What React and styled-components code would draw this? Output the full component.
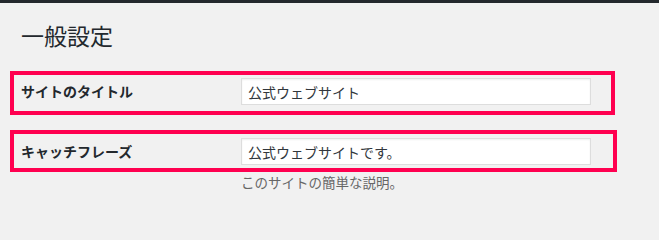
import styled, { createGlobalStyle } from 'styled-components';

const FONT = '"Noto Sans CJK JP", "Noto Sans", sans-serif';
const COLOR_BG = '#f1f1f1';
const COLOR_DARK = '#23282d';
const COLOR_MARK = '#ff0050';

const GlobalStyle = createGlobalStyle`
  body {
    margin: 0;
    background-color: ${COLOR_BG};
    color: ${COLOR_DARK};
    font-family: ${FONT};
  }
`;

const rows = [
  { label: 'サイトのタイトル', value: '公式ウェブサイト', width: 605, height: 44, top: 3 },
  {
    label: 'キャッチフレーズ',
    value: '公式ウェブサイトです。',
    width: 607,
    height: 42,
    top: 4,
    note: 'このサイトの簡単な説明。',
  },
];

function App() {
  return (
    <Page>
      <GlobalStyle />
      <TopBar />
      <Wrap>
        <Heading>一般設定</Heading>
        <Form>
          {rows.map((row) => (
            <Field key={row.label}>
              <Marked $width={row.width} $height={row.height} $top={row.top}>
                <Label>{row.label}</Label>
                <TextInput readOnly value={row.value} />
              </Marked>
              {row.note ? <Note>{row.note}</Note> : null}
            </Field>
          ))}
        </Form>
      </Wrap>
    </Page>
  );
}

const Page = styled.div`
  width: 659px;
  height: 209px;
  overflow: hidden;
`;

const TopBar = styled.div`
  height: 3px;
  background-color: ${COLOR_DARK};
`;

const Wrap = styled.div`
  display: flex;
  flex-direction: column;
  padding: 0 0 0 10px;
`;

const Heading = styled.h1`
  margin: 18px 0 21px;
  padding: 0 11px;
  font-size: 23px;
  font-weight: 400;
  line-height: 29px;
  color: ${COLOR_DARK};
`;

const Form = styled.div`
  display: flex;
  flex-direction: column;
  gap: 15px;
`;

const Field = styled.div`
  display: flex;
  flex-direction: column;
`;

const Marked = styled.div`
  box-sizing: border-box;
  display: flex;
  align-items: flex-start;
  width: ${({ $width }) => $width}px;
  height: ${({ $height }) => $height}px;
  padding-top: ${({ $top }) => $top}px;
  border: 4px solid ${COLOR_MARK};
`;

const Label = styled.div`
  width: 227px;
  padding-left: 7px;
  box-sizing: border-box;
  font-size: 14px;
  font-weight: 700;
  line-height: 27px;
  color: ${COLOR_DARK};
`;

const TextInput = styled.input`
  box-sizing: border-box;
  width: 350px;
  height: 27px;
  margin: 0;
  padding: 0 6px;
  border: 1px solid #ddd;
  box-shadow: inset 0 1px 2px rgba(0, 0, 0, 0.07);
  background-color: #fff;
  font-family: ${FONT};
  font-size: 14px;
  color: #32373c;
  outline: none;
`;

const Note = styled.p`
  margin: 1px 0 0 231px;
  font-size: 13.5px;
  line-height: 18px;
  color: #666;
`;

export default App;
